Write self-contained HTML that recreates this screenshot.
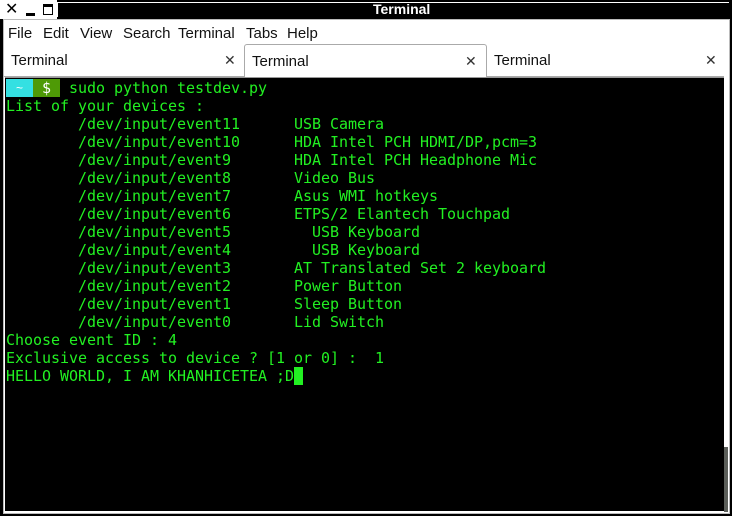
<!DOCTYPE html>
<html><head><meta charset="utf-8"><style>
*{margin:0;padding:0;box-sizing:border-box}
body{width:732px;height:516px;background:#000;position:relative;overflow:hidden;font-family:"Liberation Sans","DejaVu Sans",sans-serif}
.win{position:absolute;left:3px;top:19px;width:727px;height:495px;background:#fff;border:1px solid #bbb}
.title{position:absolute;left:0;top:0;width:732px;height:19px;background:#000;color:#fff}
.menu span{position:absolute;top:25px;font-size:15px;color:#111}
.tab{position:absolute;top:44px;height:33px;font-size:15px;color:#111;padding:8px 0 0 7px;background:#fff}
.x{position:absolute;top:8px;font-size:14px;font-weight:bold;color:#333}
.term{position:absolute;left:5px;top:77px;width:719px;height:434px;background:#000;border-top:1px solid #999}
pre{position:absolute;left:1px;top:1px;font-family:"DejaVu Sans Mono","Liberation Mono",monospace;font-size:15px;line-height:18px;color:#22f022;letter-spacing:-0.03px}
.sb{position:absolute;left:724px;top:447px;width:4px;height:65px;background:#5c5f5a}
</style></head><body>
<div class="win"></div>
<div class="title">
 <div style="position:absolute;left:0;top:0;width:57px;height:19px;background:#fff"></div>
 <div style="position:absolute;left:5px;top:0;font-size:16px;font-weight:bold;line-height:20px;color:#000">✕</div>
 <div style="position:absolute;left:26px;top:13px;width:9px;height:3px;background:#000"></div>
 <div style="position:absolute;left:43px;top:4px;width:10px;height:11px;border:1.5px solid #000;border-top-width:3px"></div>
 <div style="position:absolute;left:57px;top:2px;width:672px;height:15px;background:#000;border-left:1px solid #fff;border-top:1px solid #fff"></div>
 <div style="position:absolute;left:373px;top:1px;font-size:14px;font-weight:bold;line-height:17px">Terminal</div>
</div>
<div class="menu"><span style="left:8px">File</span><span style="left:43px">Edit</span><span style="left:80px">View</span><span style="left:123px">Search</span><span style="left:178px">Terminal</span><span style="left:246px">Tabs</span><span style="left:287px">Help</span></div>
<div class="tab" style="left:4px;width:240px;border-bottom:1px solid #aaa">Terminal<span class="x" style="left:220px">✕</span></div>
<div class="tab" style="left:244px;width:243px;border:1px solid #aaa;border-bottom:none;border-radius:3px 3px 0 0">Terminal<span class="x" style="left:220px">✕</span></div>
<div class="tab" style="left:487px;width:237px;border-bottom:1px solid #aaa">Terminal<span class="x" style="left:218px">✕</span></div>
<div class="term">
 <div style="position:absolute;left:1px;top:1px;width:27px;height:18px;background:#34e0e2;color:#fff;font-size:12px;text-align:center;line-height:18px">~</div>
 <div style="position:absolute;left:28px;top:1px;width:27px;height:18px;background:#4e9a06;color:#fff;font-family:'DejaVu Sans Mono',monospace;font-size:15px;text-align:center;line-height:18px">$</div>
<pre>       sudo python testdev.py
List of your devices :
        /dev/input/event11      USB Camera
        /dev/input/event10      HDA Intel PCH HDMI/DP,pcm=3
        /dev/input/event9       HDA Intel PCH Headphone Mic
        /dev/input/event8       Video Bus
        /dev/input/event7       Asus WMI hotkeys
        /dev/input/event6       ETPS/2 Elantech Touchpad
        /dev/input/event5         USB Keyboard
        /dev/input/event4         USB Keyboard
        /dev/input/event3       AT Translated Set 2 keyboard
        /dev/input/event2       Power Button
        /dev/input/event1       Sleep Button
        /dev/input/event0       Lid Switch
Choose event ID : 4
Exclusive access to device ? [1 or 0] :  1
HELLO WORLD, I AM KHANHICETEA ;D<span style="background:#22f022">&nbsp;</span></pre>
</div>
<div class="sb"></div>
</body></html>
